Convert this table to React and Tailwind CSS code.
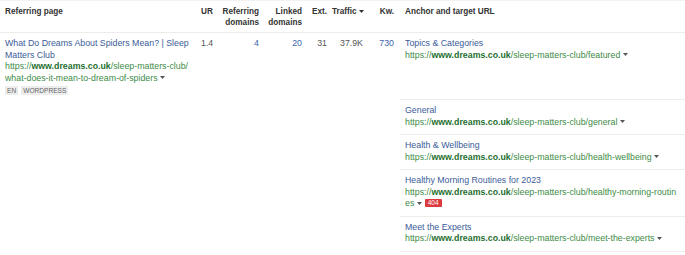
import React from 'react';

const Caret = ({ className = '' }) => (
  <svg width="5" height="3" viewBox="0 0 5 3" className={`inline-block align-middle ${className}`}>
    <path d="M0 0h5L2.5 3z" fill="currentColor" />
  </svg>
);

const Url = ({ path }) => (
  <span className="text-[#3d8b46]">
    https://<span className="font-bold text-[#1f6f30]">www.dreams.co.uk</span>
    {path}
  </span>
);

const anchors = [
  { title: 'Topics & Categories', path: '/sleep-matters-club/featured' },
  { title: 'General', path: '/sleep-matters-club/general' },
  { title: 'Health & Wellbeing', path: '/sleep-matters-club/health-wellbeing' },
  { title: 'Healthy Morning Routines for 2023', path: '/sleep-matters-club/healthy-morning-routines', broken: true },
  { title: 'Meet the Experts', path: '/sleep-matters-club/meet-the-experts' },
];

const AnchorCell = ({ a, first }) => (
  <div className={`pl-[5px] pr-[6px] pt-[5px] border-b border-[#ececec] ${first ? 'h-[67px]' : 'pb-[6px]'}`}>
    <div className="text-[#3b5c99]">{a.title}</div>
    <div className="break-all">
      <Url path={a.path} />
      <span className="whitespace-nowrap">
        {' '}
        <Caret className="text-[#555] mb-[1px]" />
        {a.broken && (
          <span className="ml-[3px] inline-block align-middle mb-[2px] px-[3px] h-[8px] leading-[8px] rounded-[1px] bg-[#dc3a3f] text-white text-[6.5px]">
            404
          </span>
        )}
      </span>
    </div>
  </div>
);

export default function App() {
  return (
    <div
      className="w-[685px] h-[255px] bg-white text-[8.8px] leading-[11.5px] text-[#333] overflow-hidden"
      style={{ fontFamily: '"Liberation Sans", Arial, sans-serif' }}
    >
      {/* header */}
      <div className="flex items-start h-[33px] border-t border-[#f2f2f2] border-b border-b-[#ececec] pt-[6px] text-[8.2px] leading-[10.5px] font-bold text-[#333]">
        <div className="w-[196px] pl-[5px]">Referring page</div>
        <div className="w-[21px] pl-[5px]">UR</div>
        <div className="w-[47px] pr-[5px] text-right">Referring domains</div>
        <div className="w-[43px] pr-[5px] text-right">Linked domains</div>
        <div className="w-[25px] pr-[5px] text-right">Ext.</div>
        <div className="w-[36px] pr-[5px] text-right whitespace-nowrap">
          Traffic <Caret className="text-[#333] mb-[1px]" />
        </div>
        <div className="w-[32px] pr-[6px] text-right">Kw.</div>
        <div className="flex-1 pl-[5px]">Anchor and target URL</div>
      </div>

      {/* row */}
      <div className="flex items-start">
        <div className="w-[400px] flex items-start pt-[5px] pb-[5px]">
          <div className="w-[196px] pl-[5px] pr-[5px]">
            <div className="text-[#3b5c99]">What Do Dreams About Spiders Mean? | Sleep Matters Club</div>
            <div>
              <Url path="/sleep-matters-club/ what-does-it-mean-to-dream-of-spiders" />{' '}
              <Caret className="text-[#555] mb-[1px]" />
            </div>
            <div className="flex gap-[3px] mt-[2px]">
              <span className="px-[2px] h-[9px] leading-[9px] bg-[#ededed] text-[#666] text-[6.6px]">EN</span>
              <span className="px-[2px] h-[9px] leading-[9px] bg-[#ededed] text-[#666] text-[6.6px]">WORDPRESS</span>
            </div>
          </div>
          <div className="w-[21px] pl-[5px] text-[#555]">1.4</div>
          <div className="w-[47px] pr-[5px] text-right text-[#3b66ad]">4</div>
          <div className="w-[43px] pr-[5px] text-right text-[#3b66ad]">20</div>
          <div className="w-[25px] pr-[5px] text-right text-[#555]">31</div>
          <div className="w-[36px] pr-[5px] text-right text-[#555]">37.9K</div>
          <div className="w-[32px] pr-[6px] text-right text-[#3b66ad]">730</div>
        </div>
        <div className="flex-1 flex flex-col">
          {anchors.map((a, i) => (
            <AnchorCell key={a.title} a={a} first={i === 0} />
          ))}
        </div>
      </div>
    </div>
  );
}
